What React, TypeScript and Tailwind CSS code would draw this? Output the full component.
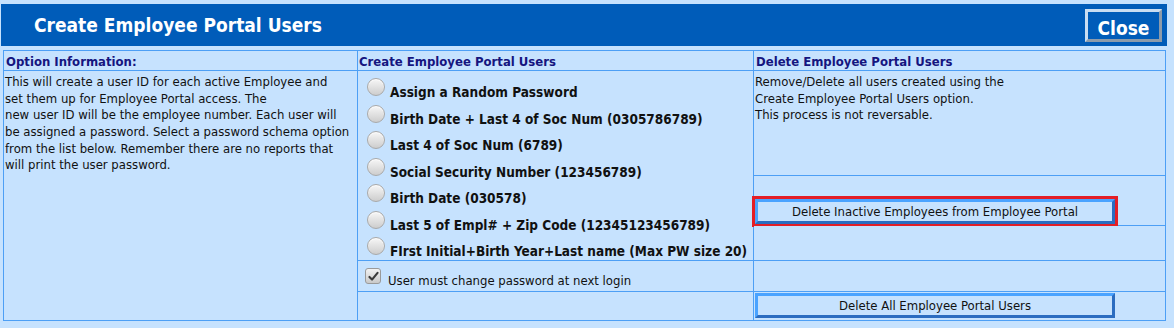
import React from "react";

const options = [
  "Assign a Random Password",
  "Birth Date + Last 4 of Soc Num (0305786789)",
  "Last 4 of Soc Num (6789)",
  "Social Security Number (123456789)",
  "Birth Date (030578)",
  "Last 5 of Empl# + Zip Code (12345123456789)",
  "FIrst Initial+Birth Year+Last name (Max PW size 20)",
];

function Radio() {
  return (
    <span className="mt-0 h-[18px] w-[18px] shrink-0 rounded-full border border-[#a9a9a9] bg-linear-to-b from-[#f7f7f7] to-[#cdcdcd] shadow-[inset_0_1px_1px_rgba(255,255,255,0.8)]" />
  );
}

function Checkbox() {
  return (
    <span className="flex h-[16px] w-[16px] shrink-0 items-center justify-center rounded-[3px] border border-[#9a9a9a] bg-linear-to-b from-[#f2f2f2] to-[#c9c9c9]">
      <svg viewBox="0 0 16 16" className="h-[13px] w-[13px]">
        <path d="M3 8.5 L6.2 11.8 L13 3.5" fill="none" stroke="#3a3a3a" strokeWidth="2.6" strokeLinecap="round" strokeLinejoin="round" />
      </svg>
    </span>
  );
}

function PortalButton({ children, marked }: { children: React.ReactNode; marked?: boolean }) {
  return (
    <button
      className={
        "h-[25px] w-[360px] border-[3px] border-t-[#4aa3ff] border-l-[#4aa3ff] border-b-[#2b6cc0] border-r-[#2b6cc0] bg-[#c6e2fe] pt-px text-[13px] text-[#111] " +
        (marked ? "outline-[3px] outline-solid outline-[#e41e26] outline-offset-0" : "")
      }
    >
      {children}
    </button>
  );
}

export default function App() {
  return (
    <div
      className="h-[328px] w-[1174px] bg-[#c6e2fe] pt-[4px]"
      style={{ fontFamily: "'DejaVu Sans Condensed', 'DejaVu Sans', sans-serif" }}
    >
      {/* title bar */}
      <div className="ml-[1px] flex h-[42px] w-[1166px] items-center justify-between bg-[#005cb9] pl-[33px] pr-[5px]">
        <h1 className="text-[19px] font-bold text-white">Create Employee Portal Users</h1>
        <button className="h-[33px] w-[77px] border-[3px] border-t-[#c9ddf2] border-l-[#c9ddf2] border-b-[#8c9bab] border-r-[#8c9bab] bg-[#005cb9] pt-[2px] text-[19px] font-bold text-white">
          Close
        </button>
      </div>

      {/* options table */}
      <div className="ml-[3px] mt-[4px] grid w-[1163px] grid-cols-[353px_395px_411px] grid-rows-[19px_104px_49px_34px_30px_28px] gap-px bg-[#4d9ff5] p-px text-[13px] leading-[16.67px] text-[#111]">
        <div className="bg-[#c6e2fe] pl-[2px] pt-[3px] font-bold text-[#15157f]">Option Information:</div>
        <div className="bg-[#c6e2fe] pl-[1px] pt-[3px] font-bold text-[#15157f]">Create Employee Portal Users</div>
        <div className="bg-[#c6e2fe] pl-[2px] pt-[3px] font-bold text-[#15157f]">Delete Employee Portal Users</div>

        <div className="row-span-5 bg-[#c6e2fe] pl-px pt-[3px]">
          This will create a user ID for each active Employee and
          <br />
          set them up for Employee Portal access. The
          <br />
          new user ID will be the employee number. Each user will
          <br />
          be assigned a password. Select a password schema option
          <br />
          from the list below. Remember there are no reports that
          <br />
          will print the user password.
        </div>

        <div className="row-span-3 bg-[#c6e2fe] pl-[9px] pt-[7px]">
          {options.map((o) => (
            <div key={o} className="flex h-[26.5px] items-start gap-[5px]">
              <Radio />
              <span className="pt-[6px] text-[13.5px] font-bold whitespace-nowrap">{o}</span>
            </div>
          ))}
        </div>

        <div className="bg-[#c6e2fe] pl-px pt-[3px]">
          Remove/Delete all users created using the
          <br />
          Create Employee Portal Users option.
          <br />
          This process is not reversable.
        </div>

        <div className="flex items-end bg-[#c6e2fe] pb-px pl-px">
          <PortalButton marked>Delete Inactive Employees from Employee Portal</PortalButton>
        </div>
        <div className="bg-[#c6e2fe]" />

        <div className="flex items-start gap-[7px] bg-[#c6e2fe] pl-[7px] pt-[7px]">
          <Checkbox />
          <span className="pt-[5px]">User must change password at next login</span>
        </div>
        <div className="bg-[#c6e2fe]" />

        <div className="bg-[#c6e2fe]" />
        <div className="bg-[#c6e2fe] pl-px pt-px">
          <PortalButton>Delete All Employee Portal Users</PortalButton>
        </div>
      </div>
    </div>
  );
}
